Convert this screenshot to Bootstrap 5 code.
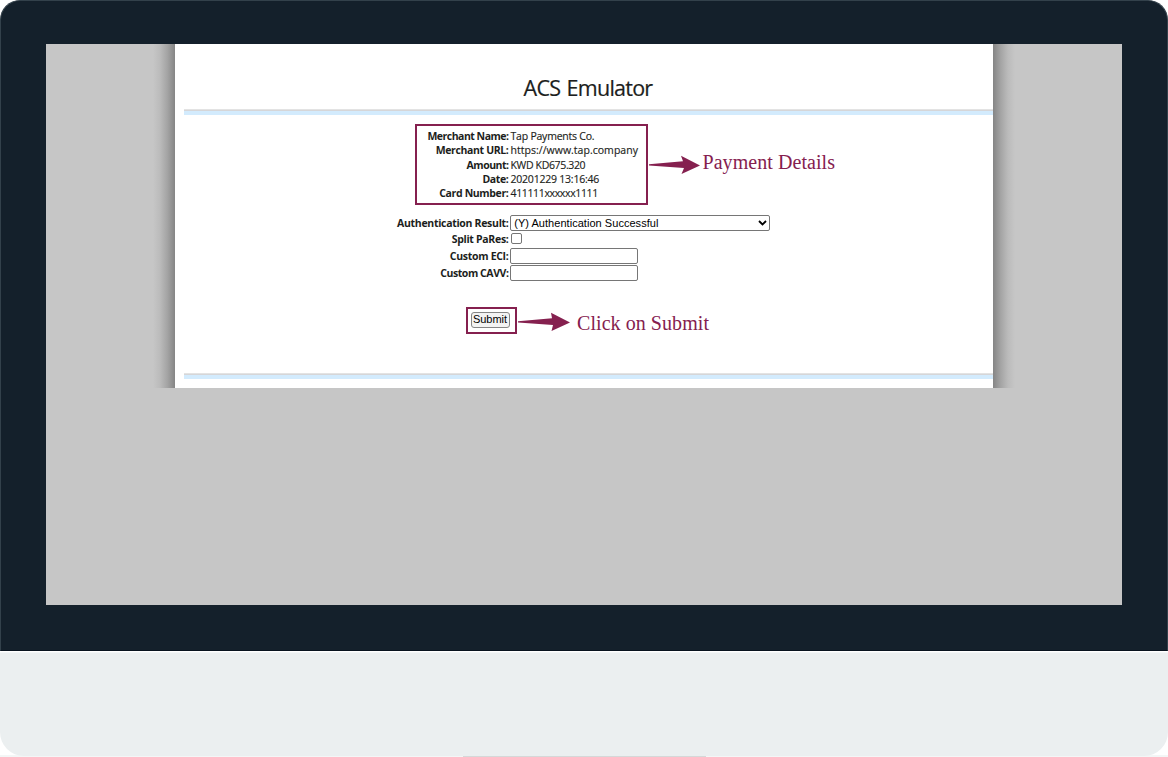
<!DOCTYPE html>
<html lang="en">
<head>
<meta charset="utf-8">
<meta name="viewport" content="width=device-width, initial-scale=1">
<title>ACS Emulator</title>
<link href="https://cdn.jsdelivr.net/npm/bootstrap@5.3.0/dist/css/bootstrap.min.css" rel="stylesheet">
<script src="https://cdn.jsdelivr.net/npm/bootstrap@5.3.0/dist/js/bootstrap.bundle.min.js"></script>
<style>
body{background:#fff;font-family:"Open Sans",sans-serif;color:#1c1e20}
.monitor{width:1168px;height:757px;background:linear-gradient(#f3f6f6,#f3f6f6) 0 755px/100% 2px no-repeat}
.bezel{height:651px;background:#14202b;border-radius:20px 20px 0 0;border:1px solid #33414b;border-bottom-color:#08131e;padding:43px 45px 45px}
.display{background:#c6c6c6;height:561px}
.chin{height:104px;margin-top:1px;background:#ebeff0;border-radius:0 0 24px 24px;border-top:1px solid #f3f6f7}
.foot{width:243px;height:1px;background:#d5d8d8}
.shade{width:22px;height:344px;background:linear-gradient(to left,#858585,#a4a4a4 35%,#bbb 68%,#c6c6c6)}
.shade.flip{transform:scaleX(-1)}
.sheet{width:818px;height:344px}
.rule{height:6px;margin-left:8.5px;background:linear-gradient(#e3e3e3 0 1px,#d6d6d8 1px 2px,#d3ebfd 2px)}
h1{font-size:21.5px;line-height:28px;height:65px;padding-top:30px;margin:0 0 0 8px;letter-spacing:-.75px;word-spacing:1.5px;-webkit-text-stroke:.2px}
.hl{border:2px solid #85204f}
.details{width:233px;height:81px;margin-left:240px;padding-top:3px}
.line{font-size:10.5px;line-height:14.25px;height:14.25px;gap:2px;white-space:nowrap}
.line b{width:91.5px;text-align:right;font-weight:700;letter-spacing:-.36px}
.line b.snug{letter-spacing:-.5px}
.line span{letter-spacing:-.35px;-webkit-text-stroke:.15px}
.line .near{letter-spacing:-.22px}
.line .even{letter-spacing:.03px}
.entry b{width:333.5px}
.entry{gap:2px;font-size:10.5px;line-height:16px;white-space:nowrap}
.entry b{text-align:right;letter-spacing:-.3px}
.entry b.snug{letter-spacing:-.43px}
.entry select,.entry input[type=text],.send{font:11px/13px "Liberation Sans",sans-serif;border:1px solid #767676;border-radius:2px;background:#fff;color:#000;padding:0}
.entry select{width:260px;height:16px;appearance:none;padding-left:3px;letter-spacing:.04px}
.entry input[type=text]{width:128px;height:16px}
.entry input[type=checkbox]{appearance:none;width:11px;height:11px;border:1px solid #767676;border-radius:2px;margin:0}
.entry b+*{margin-left:-.3px}
.chev{right:3px;top:5px}
.send{width:39px;height:16px;background:#f3f3f3;border-color:#858585;border-radius:3px}
.sendbox{width:51px;height:27px;margin-left:291px;padding:2.5px 0 0 2.5px}
.note{font:20px/24px "Liberation Serif",serif;color:#85204f;white-space:nowrap;letter-spacing:.06px}
</style>
</head>
<body>
<main class="monitor overflow-hidden">
  <section class="bezel">
    <div class="display d-flex justify-content-center align-items-start">
      <div class="shade"></div>
      <div class="sheet bg-white">
        <h1 class="fw-normal text-center">ACS Emulator</h1>
        <div class="rule"></div>
        <div class="d-flex" style="margin-top:9px">
          <div class="hl details">
            <div class="line d-flex"><b class="snug">Merchant Name:</b><span class="near">Tap Payments Co.</span></div>
            <div class="line d-flex"><b>Merchant URL:</b><span class="even">https://www.tap.company</span></div>
            <div class="line d-flex"><b class="snug">Amount:</b><span>KWD KD675.320</span></div>
            <div class="line d-flex"><b>Date:</b><span class="near">20201229 13:16:46</span></div>
            <div class="line d-flex"><b>Card Number:</b><span>411111xxxxxx1111</span></div>
          </div>
          <svg class="flex-shrink-0" width="52" height="20" style="margin:31px 2px 0 1px"><path d="M0 9.2 34 6.3 32 .8 51 10.5 32.5 19 35 13 0 10.6Z" fill="#85204f"/></svg>
          <div class="note" style="margin-top:26px;margin-left:-.5px">Payment Details</div>
        </div>
        <form class="m-0">
          <div class="entry d-flex" style="margin-top:10px"><b>Authentication Result:</b><span class="position-relative d-flex"><select><option>(Y) Authentication Successful</option></select><svg class="chev position-absolute" width="9" height="6"><path d="M1 1 4.5 4.5 8 1" fill="none" stroke="#000" stroke-width="1.8"/></svg></span></div>
          <div class="entry d-flex"><b>Split PaRes:</b><input type="checkbox" style="margin-top:2px"></div>
          <div class="entry d-flex" style="margin-top:1px"><b>Custom ECI:</b><input type="text"></div>
          <div class="entry d-flex" style="margin-top:1px"><b class="snug">Custom CAVV:</b><input type="text"></div>
          <div class="d-flex" style="margin-top:26px">
            <div class="hl sendbox"><button type="button" class="send d-block">Submit</button></div>
            <svg class="flex-shrink-0" width="53" height="20" style="margin:5px 6px 0 1px"><path d="M0 9.2 34 6.3 33 .8 52 10.5 33.5 19 35 13 0 10.4Z" fill="#85204f"/></svg>
            <div class="note" style="margin-top:4px">Click on Submit</div>
          </div>
        </form>
        <div class="rule" style="margin-top:38px"></div>
      </div>
      <div class="shade flip"></div>
    </div>
  </section>
  <div class="chin"></div>
  <div class="foot mx-auto"></div>
</main>
</body>
</html>
